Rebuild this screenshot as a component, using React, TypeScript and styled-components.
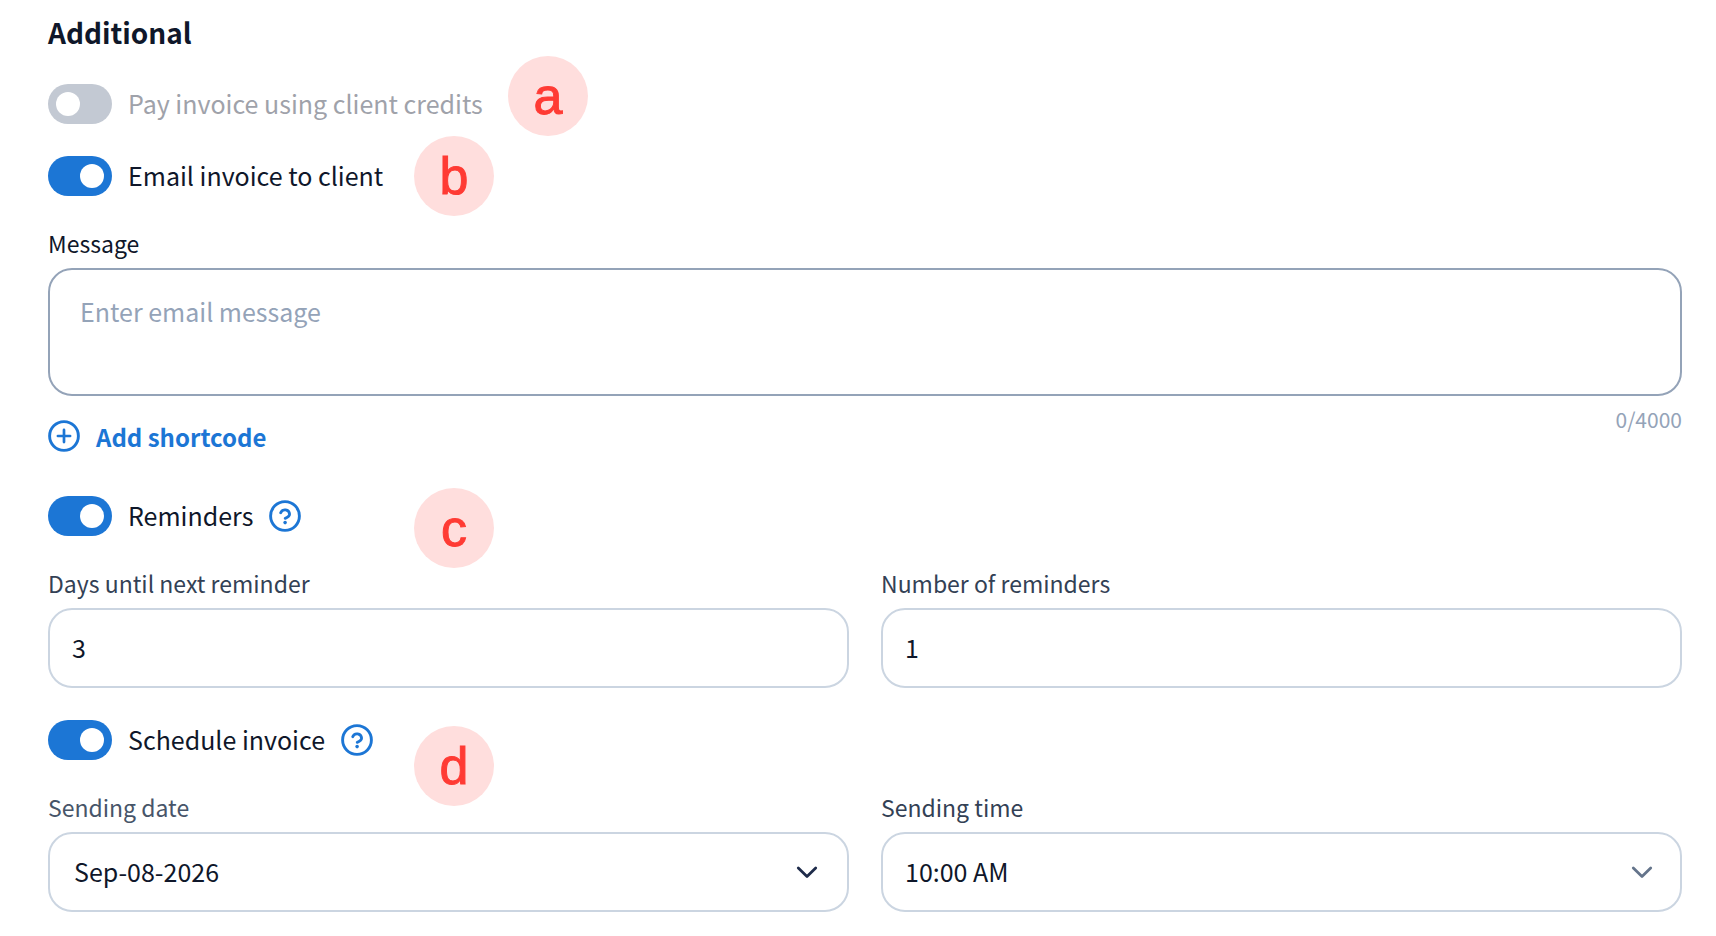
import React, { useState } from "react";
import styled, { createGlobalStyle } from "styled-components";

const GlobalStyle = createGlobalStyle`
  body {
    margin: 0;
    background-color: #fff;
    color: #0f172a;
    font-family: "Noto Sans CJK SC", "Noto Sans", sans-serif;
  }
  * {
    box-sizing: border-box;
  }
`;

const Page = styled.main`
  padding: 12px 34px 24px 48px;
`;

const Form = styled.form`
  display: flex;
  flex-direction: column;
  gap: 32px;
`;

const Title = styled.h2`
  margin: 0;
  font-size: 28px;
  line-height: 40px;
  font-weight: 700;
`;

const Row = styled.div`
  position: relative;
  display: flex;
  align-items: center;
  gap: 16px;
  height: 40px;
`;

const SwitchLabel = styled.label<{ $disabled?: boolean }>`
  display: flex;
  align-items: center;
  gap: 16px;
  font-size: 25px;
  line-height: 38px;
  color: ${({ $disabled }) => ($disabled ? "#9fa2aa" : "#0f172a")};
`;

const SwitchText = styled.span`
  padding-bottom: 2px;
`;

const Switch = styled.input`
  appearance: none;
  display: flex;
  align-items: center;
  width: 64px;
  height: 40px;
  margin: 0;
  padding: 0 8px;
  border-radius: 20px;
  background-color: #c3c9d3;
  cursor: pointer;
  &::before {
    content: "";
    width: 24px;
    height: 24px;
    border-radius: 50%;
    background-color: #fff;
  }
  &:checked {
    justify-content: flex-end;
    background-color: #1c76d5;
  }
`;

const Marker = styled.span<{ $left: number; $top: number }>`
  position: absolute;
  left: ${({ $left }) => $left}px;
  top: ${({ $top }) => $top}px;
  width: 80px;
  height: 80px;
  border-radius: 50%;
  background-color: #ffdedd;
  color: #ff3b34;
  font-family: "Liberation Sans", Arial, sans-serif;
  font-size: 52px;
  line-height: 80px;
  text-align: center;
  -webkit-text-stroke: 1px #ff3b34;
`;

const Field = styled.div`
  display: flex;
  flex-direction: column;
  gap: 10px;
`;

const Label = styled.label<{ $color?: string }>`
  font-size: 23px;
  line-height: 30px;
  color: ${({ $color }) => $color || "#334155"};
`;

const Columns = styled.div`
  display: grid;
  grid-template-columns: 1fr 1fr;
  gap: 32px;
`;

const Input = styled.input`
  width: 100%;
  height: 80px;
  padding: 0 22px 2px;
  border: 2px solid #cbd5e1;
  border-radius: 24px;
  background-color: #fff;
  color: #0f172a;
  font-family: inherit;
  font-size: 25px;
`;

const TextArea = styled.textarea`
  display: block;
  width: 100%;
  height: 128px;
  padding: 22px 30px;
  border: 2px solid #94a3b8;
  border-radius: 24px;
  color: #0f172a;
  font-family: inherit;
  font-size: 25px;
  line-height: 38px;
  resize: none;
  &::placeholder {
    color: #94a3b8;
    opacity: 1;
  }
`;

const MessageFooter = styled.div`
  display: flex;
  justify-content: space-between;
  align-items: flex-start;
  padding: 8px 0;
`;

const LinkButton = styled.button`
  display: flex;
  align-items: center;
  gap: 16px;
  height: 40px;
  margin-top: 12px;
  padding: 0;
  border: 0;
  background: none;
  color: #1c76d5;
  font-family: inherit;
  font-size: 24px;
  font-weight: 700;
  cursor: pointer;
`;

const Counter = styled.span`
  font-size: 21px;
  line-height: 30px;
  color: #94a3b8;
`;

const HelpButton = styled.button`
  display: flex;
  padding: 0;
  border: 0;
  background: none;
  color: #1c76d5;
  cursor: pointer;
`;

const SelectBox = styled.div`
  position: relative;
`;

const Select = styled(Input)<{ $inset: number }>`
  appearance: none;
  padding: 0 72px 2px ${({ $inset }) => $inset}px;
`;

const Chevron = styled.svg<{ $inset: number; $color: string }>`
  position: absolute;
  top: 24px;
  right: ${({ $inset }) => $inset + 2}px;
  width: 32px;
  height: 32px;
  color: ${({ $color }) => $color};
  pointer-events: none;
`;

const PlusIcon = () => (
  <svg width="32" height="32" viewBox="0 0 32 32" fill="none" stroke="currentColor" strokeLinecap="round">
    <circle cx="16" cy="16" r="14.4" strokeWidth="2.9" />
    <path d="M16 9.9v12.2M9.9 16h12.2" strokeWidth="2.7" />
  </svg>
);

const HelpIcon = () => (
  <svg width="32" height="32" viewBox="0 0 32 32" fill="none" stroke="currentColor" strokeLinecap="round" strokeLinejoin="round">
    <circle cx="16" cy="16" r="14.4" strokeWidth="2.9" />
    <path d="M11.7 12.8a4.6 4.6 0 0 1 8.9 1.3c0 2.8-4.4 4.2-4.4 4.2" strokeWidth="2.8" />
    <circle cx="16.1" cy="22.6" r="1.8" fill="currentColor" stroke="none" />
  </svg>
);

type DropDownProps = {
  id: string;
  value: string;
  inset: number;
  color: string;
};

const DropDown = ({ id, value, inset, color }: DropDownProps) => (
  <SelectBox>
    <Select as="select" id={id} $inset={inset}>
      <option>{value}</option>
    </Select>
    <Chevron $inset={inset} $color={color} viewBox="0 0 32 32" fill="none" stroke="currentColor">
      <path d="M7.3 12l8.7 8.4 8.7-8.4" strokeWidth="2.8" strokeLinecap="round" strokeLinejoin="round" />
    </Chevron>
  </SelectBox>
);

const App = () => {
  const [emailClient, setEmailClient] = useState(true);
  const [reminders, setReminders] = useState(true);
  const [schedule, setSchedule] = useState(true);
  const [message, setMessage] = useState("");

  return (
    <Page>
      <GlobalStyle />
      <Form>
        <Title>Additional</Title>
        <Row>
          <SwitchLabel $disabled>
            <Switch type="checkbox" role="switch" disabled />
            <SwitchText>Pay invoice using client credits</SwitchText>
          </SwitchLabel>
          <Marker $left={460} $top={-28}>a</Marker>
        </Row>
        <Row>
          <SwitchLabel>
            <Switch
              type="checkbox"
              role="switch"
              checked={emailClient}
              onChange={() => setEmailClient(!emailClient)}
            />
            <SwitchText>Email invoice to client</SwitchText>
          </SwitchLabel>
          <Marker $left={366} $top={-20}>b</Marker>
        </Row>

        <div>
          <Field>
            <Label htmlFor="message" $color="#0f172a">Message</Label>
            <TextArea
              id="message"
              placeholder="Enter email message"
              maxLength={4000}
              value={message}
              onChange={(e) => setMessage(e.target.value)}
            />
          </Field>
          <MessageFooter>
            <LinkButton type="button">
              <PlusIcon />
              Add shortcode
            </LinkButton>
            <Counter>{message.length}/4000</Counter>
          </MessageFooter>
        </div>

        <Row>
          <SwitchLabel>
            <Switch
              type="checkbox"
              role="switch"
              checked={reminders}
              onChange={() => setReminders(!reminders)}
            />
            <SwitchText>Reminders</SwitchText>
          </SwitchLabel>
          <HelpButton type="button" aria-label="About reminders">
            <HelpIcon />
          </HelpButton>
          <Marker $left={366} $top={-8}>c</Marker>
        </Row>
        <Columns>
          <Field>
            <Label htmlFor="days">Days until next reminder</Label>
            <Input id="days" inputMode="numeric" defaultValue="3" />
          </Field>
          <Field>
            <Label htmlFor="count">Number of reminders</Label>
            <Input id="count" inputMode="numeric" defaultValue="1" />
          </Field>
        </Columns>

        <Row>
          <SwitchLabel>
            <Switch
              type="checkbox"
              role="switch"
              checked={schedule}
              onChange={() => setSchedule(!schedule)}
            />
            <SwitchText>Schedule invoice</SwitchText>
          </SwitchLabel>
          <HelpButton type="button" aria-label="About scheduling">
            <HelpIcon />
          </HelpButton>
          <Marker $left={366} $top={6}>d</Marker>
        </Row>
        <Columns>
          <Field>
            <Label htmlFor="date" $color="#475569">Sending date</Label>
            <DropDown id="date" value="Sep-08-2026" inset={24} color="#1e2b4a" />
          </Field>
          <Field>
            <Label htmlFor="time">Sending time</Label>
            <DropDown id="time" value="10:00 AM" inset={22} color="#64748b" />
          </Field>
        </Columns>
      </Form>
    </Page>
  );
};

export default App;
